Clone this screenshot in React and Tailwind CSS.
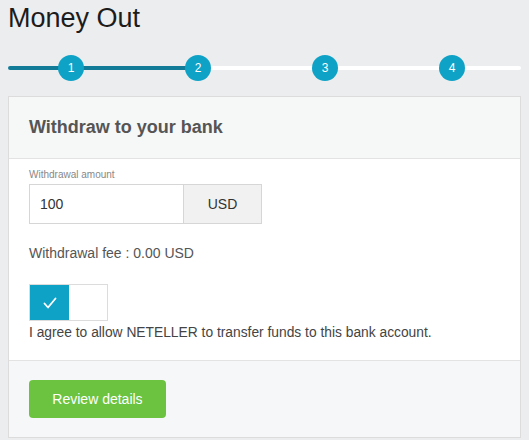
import React from 'react';

function Steps() {
  const steps = [1, 2, 3, 4];
  return (
    <div className="relative mx-2 mt-[22px] h-[26px]">
      <div className="absolute left-0 right-0 top-[11px] h-[4px] rounded-full bg-white" />
      <div className="absolute left-0 top-[11px] h-[4px] w-[190px] rounded-full bg-[#127b98]" />
      {steps.map((n, i) => (
        <div
          key={n}
          className={`absolute top-0 flex h-[26px] w-[26px] items-center justify-center rounded-full bg-[#0ea2c7] text-[12px] text-white ${
            ['left-[50px]', 'left-[177px]', 'left-[304px]', 'left-[431px]'][i]
          }`}
        >
          {n}
        </div>
      ))}
    </div>
  );
}

export default function App() {
  return (
    <div className="h-[440px] w-[529px] overflow-hidden bg-[#ecedee] font-['Liberation_Sans',Arial,sans-serif]">
      <h1 className="px-2 pt-[3px] text-[27px] leading-[30px] text-[#1c1c1c]">Money Out</h1>
      <Steps />
      <div className="mx-2 mt-[15px] border border-[#dcdcdc] bg-white">
        <div className="flex h-[62px] items-center border-b border-[#e3e3e3] bg-[#f6f7f7] px-5">
          <h2 className="text-[18px] font-bold text-[#555]">Withdraw to your bank</h2>
        </div>
        <div className="px-5 pt-[10px] pb-[19px]">
          <div className="text-[10px] leading-[12px] text-[#888]">Withdrawal amount</div>
          <div className="mt-[3px] flex h-[40px] w-[233px]">
            <div className="flex w-[155px] items-center border border-[#d6d6d6] px-[10px] text-[14px] text-[#333]">100</div>
            <div className="flex w-[78px] items-center justify-center border border-l-0 border-[#d6d6d6] bg-[#f1f1f1] text-[14px] text-[#333]">USD</div>
          </div>
          <div className="mt-[21px] text-[14px] leading-[16px] text-[#555]">Withdrawal fee : 0.00 USD</div>
          <div className="mt-[23px] flex h-[37px] w-[79px] border border-[#dcdcdc]">
            <div className="flex w-[39px] items-center justify-center bg-[#0ea2c7]">
              <svg width="16" height="14" viewBox="0 0 16 14" fill="none">
                <path d="M2.5 7.5l3.5 4L13.5 2.5" stroke="white" strokeWidth="1.8" strokeLinecap="round" strokeLinejoin="round" />
              </svg>
            </div>
          </div>
          <div className="mt-[4px] text-[13.8px] leading-[16px] text-[#444]">
            I agree to allow NETELLER to transfer funds to this bank account.
          </div>
        </div>
        <div className="border-t border-[#e3e3e3] bg-[#f6f7f8] px-5 pt-[19px] pb-[19px]">
          <button className="h-[38px] w-[137px] rounded-[4px] bg-[#6bc33f] text-[14px] text-white">Review details</button>
        </div>
      </div>
    </div>
  );
}
